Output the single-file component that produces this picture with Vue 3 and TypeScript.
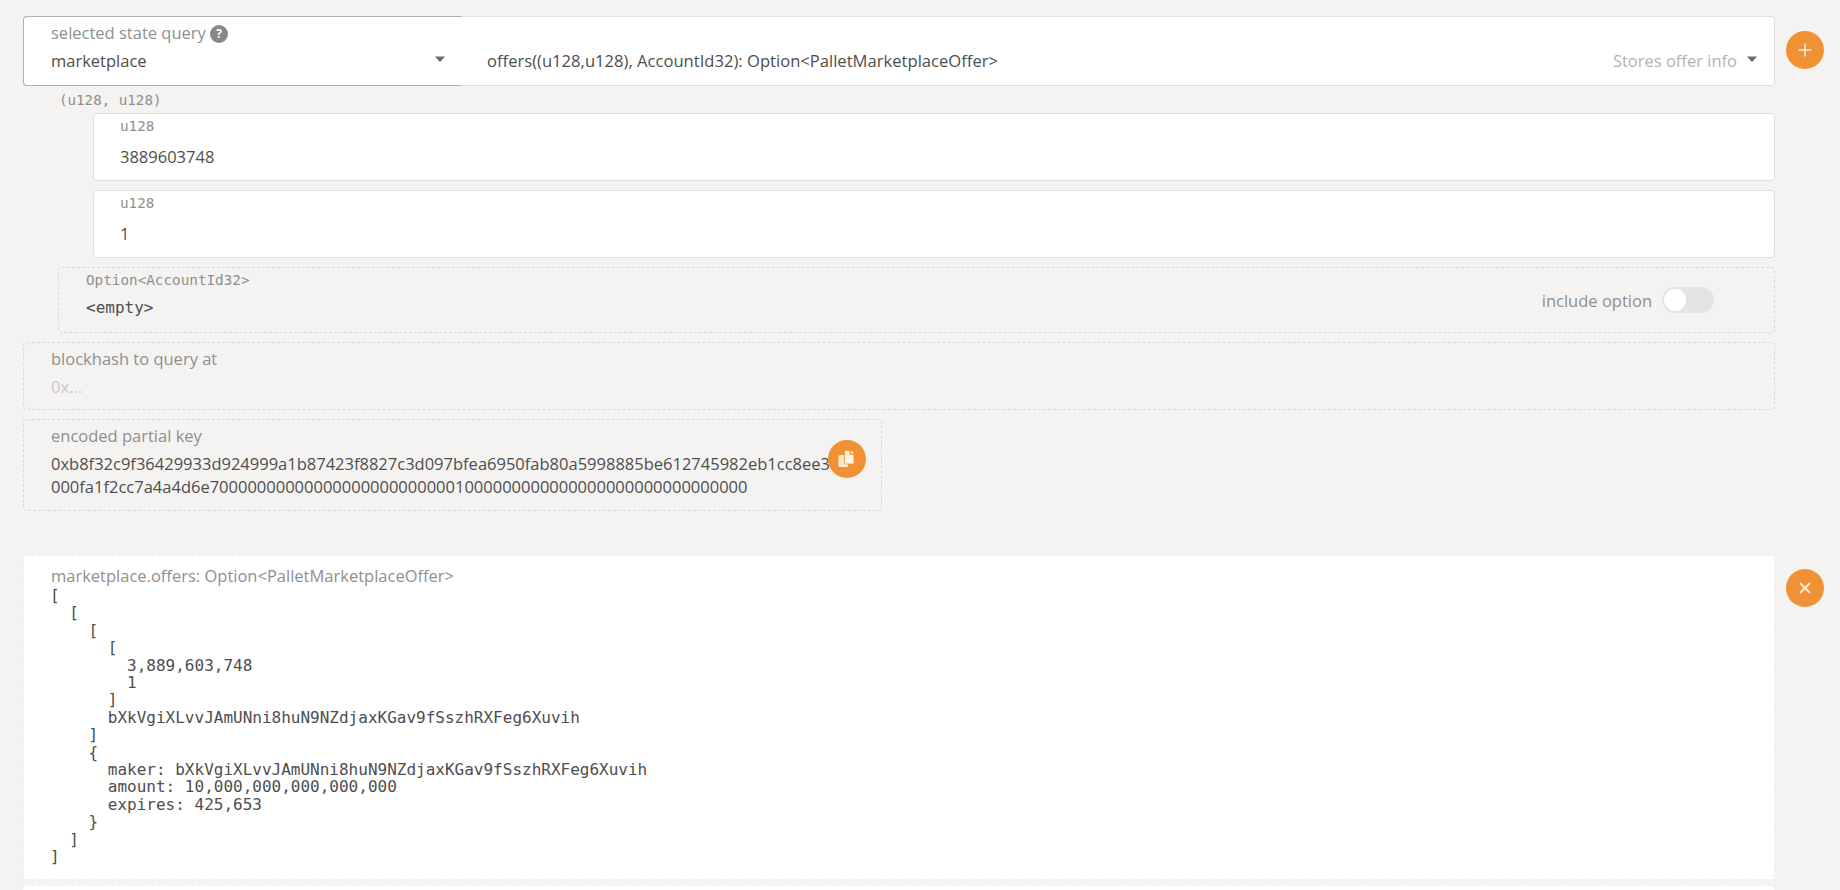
<script setup lang="ts">
const key1 = '0xb8f32c9f36429933d924999a1b87423f8827c3d097bfea6950fab80a5998885be612745982eb1cc8ee3'
const key2 = '000fa1f2cc7a4a4d6e7' + '0'.repeat(25) + '1' + '0'.repeat(30)
const output = `[
  [
    [
      [
        3,889,603,748
        1
      ]
      bXkVgiXLvvJAmUNni8huN9NZdjaxKGav9fSszhRXFeg6Xuvih
    ]
    {
      maker: bXkVgiXLvvJAmUNni8huN9NZdjaxKGav9fSszhRXFeg6Xuvih
      amount: 10,000,000,000,000,000
      expires: 425,653
    }
  ]
]`
</script>

<template>
  <div class="page">
    <section class="row">
      <div class="main">
        <div class="selects">
          <div class="select left">
            <div class="label">selected state query <span class="help">?</span></div>
            <div class="value">marketplace</div>
            <svg class="caret" width="10" height="6" viewBox="0 0 10 6"><path d="M0 0.5 H10 L5.6 5.4 Q5 5.8 4.4 5.4 Z" /></svg>
          </div>
          <div class="select right">
            <div class="value wide">offers((u128,u128), AccountId32): Option&lt;PalletMarketplaceOffer&gt;</div>
            <div class="doc">Stores offer info</div>
            <svg class="caret" width="10" height="6" viewBox="0 0 10 6"><path d="M0 0.5 H10 L5.6 5.4 Q5 5.8 4.4 5.4 Z" /></svg>
          </div>
        </div>
        <div class="tuple">(u128, u128)</div>
        <div class="input first">
          <div class="mono-label">u128</div>
          <div class="value">3889603748</div>
        </div>
        <div class="input">
          <div class="mono-label">u128</div>
          <div class="value">1</div>
        </div>
        <div class="option">
          <div class="opt-text">
            <div class="mono-label">Option&lt;AccountId32&gt;</div>
            <div class="empty">&lt;empty&gt;</div>
          </div>
          <div class="include">include option</div>
          <div class="toggle"><span class="knob"></span></div>
        </div>
        <div class="dashed hash">
          <div class="label">blockhash to query at</div>
          <div class="placeholder">0x...</div>
        </div>
        <div class="dashed key">
          <div class="label">encoded partial key</div>
          <div class="key-text">{{ key1 }}<br />{{ key2 }}</div>
          <button class="round copy" aria-label="copy">
            <svg width="18" height="18" viewBox="0 0 18 18">
              <rect x="0.5" y="5" width="9.5" height="12" rx="1.5" fill="#fde8d0" />
              <path d="M6.5 1.5 a1 1 0 0 1 1-1 H12 V4.5 H16 V13 a1 1 0 0 1-1 1 H7.5 a1 1 0 0 1-1-1 Z" fill="#fff3e6" stroke="#f19135" stroke-width="0.8" />
              <path d="M13 0.5 L16 3.5 H13 Z" fill="#fff3e6" />
            </svg>
          </button>
        </div>
      </div>
      <button class="round side" aria-label="add">
        <svg width="14" height="14" viewBox="0 0 14 14"><path d="M7 0.5 V13.5 M0.5 7 H13.5" stroke="#fdeedd" stroke-width="1.6" /></svg>
      </button>
    </section>

    <section class="row result-row">
      <div class="card">
        <div class="label">marketplace.offers: Option&lt;PalletMarketplaceOffer&gt;</div>
        <pre class="output">{{ output }}</pre>
      </div>
      <button class="round side close" aria-label="close">
        <svg width="12" height="12" viewBox="0 0 12 12"><path d="M1 1 L11 11 M11 1 L1 11" stroke="#fdeedd" stroke-width="1.9" /></svg>
      </button>
    </section>
    <div class="card next"></div>
  </div>
</template>

<style>
html, body {
  margin: 0;
  background: #f5f3f1;
  overflow: hidden;
}
</style>

<style scoped>
.page {
  box-sizing: border-box;
  width: 1840px;
  height: 890px;
  padding: 16px 0 0 23px;
  overflow: hidden;
  background: #f5f3f1;
  color: #4e4e4e;
  font-family: "Open Sans", "Noto Sans", sans-serif;
  font-size: 16.5px;
}
.row {
  display: flex;
  align-items: flex-start;
  gap: 11px;
}
.main {
  width: 1752px;
  flex: none;
}
.selects {
  display: flex;
  height: 70px;
}
.select {
  position: relative;
  box-sizing: border-box;
  height: 70px;
  background: #fff;
  border: 1px solid #dfdfdf;
}
.select.left {
  width: 438px;
  flex: none;
  padding: 5px 0 0 27px;
  border-color: #b0b0b0;
  border-right: 0;
  border-radius: 4px 0 0 4px;
}
.select.right {
  flex: 1;
  display: flex;
  justify-content: space-between;
  padding: 0 37px 0 26px;
  border-left: 0;
  border-radius: 0 4px 4px 0;
}
.select.right .value {
  margin-top: 32px;
}
.select.right .wide {
  font-size: 16.6px;
}
.select.right .doc {
  margin-top: 32px;
  color: #b3b3b3;
}
.caret {
  position: absolute;
  right: 17px;
  top: 39px;
  fill: #6b6b6b;
}
.select.left .caret {
  right: 16px;
}
.label {
  color: #8f8f8f;
  line-height: 22px;
}
.help {
  display: inline-block;
  width: 18px;
  height: 18px;
  border-radius: 50%;
  background: #878787;
  color: #fff;
  font-size: 12px;
  font-weight: 700;
  line-height: 18px;
  text-align: center;
  vertical-align: 1px;
}
.value {
  line-height: 24px;
}
.select.left .value {
  margin-top: 5px;
}
.tuple {
  margin: 5px 0 0 36px;
  height: 22px;
  line-height: 18px;
  color: #8f8f8f;
  font-family: "DejaVu Sans Mono", monospace;
  font-size: 14.2px;
}
.input {
  box-sizing: border-box;
  height: 68px;
  margin: 9px 0 0 70px;
  padding: 3px 0 0 26px;
  background: #fff;
  border: 1px solid #dfdfdf;
  border-radius: 4px;
}
.input.first {
  margin-top: 0;
}
.input .value {
  margin-top: 10px;
}
.mono-label {
  color: #8f8f8f;
  font-family: "DejaVu Sans Mono", monospace;
  font-size: 14.3px;
  line-height: 18px;
}
.option {
  box-sizing: border-box;
  display: flex;
  align-items: center;
  height: 66px;
  margin: 9px 0 0 35px;
  padding: 0 60px 0 27px;
  border: 1px dashed #d8d8d8;
  border-radius: 4px;
}
.opt-text {
  flex: 1;
  align-self: flex-start;
  padding-top: 3px;
}
.empty {
  margin-top: 9px;
  font-family: "DejaVu Sans Mono", monospace;
  font-size: 16px;
  line-height: 20px;
}
.include {
  color: #8f8f8f;
  margin-right: 10px;
}
.toggle {
  width: 52px;
  height: 26px;
  padding: 2px;
  box-sizing: border-box;
  border-radius: 13px;
  background: #e3e4e6;
}
.knob {
  display: block;
  width: 22px;
  height: 22px;
  border-radius: 50%;
  background: #fff;
}
.dashed {
  position: relative;
  box-sizing: border-box;
  margin-top: 9px;
  padding: 5px 0 0 27px;
  border: 1px dashed #d8d8d8;
  border-radius: 4px;
}
.hash {
  height: 68px;
}
.placeholder {
  margin-top: 5px;
  line-height: 24px;
  color: #c8c8c8;
}
.key {
  width: 859px;
  height: 92px;
}
.key-text {
  margin-top: 5px;
  line-height: 23px;
  white-space: nowrap;
}
.round {
  width: 38px;
  height: 38px;
  padding: 0;
  display: flex;
  align-items: center;
  justify-content: center;
  flex: none;
  border: 0;
  border-radius: 50%;
  background: #f19135;
}
.side {
  margin-top: 15px;
}
.copy {
  position: absolute;
  left: 804px;
  top: 20px;
}
.result-row {
  margin-top: 44px;
}
.card {
  box-sizing: border-box;
  width: 1752px;
  height: 325px;
  flex: none;
  padding: 9px 0 0 27px;
  background: #fff;
  border: 1px dashed #ececec;
  border-radius: 4px;
}
.close {
  margin-top: 14px;
}
.output {
  margin: 0 0 0 -1px;
  font-family: "DejaVu Sans Mono", monospace;
  font-size: 16px;
  line-height: 17.4px;
}
.next {
  margin-top: 5px;
  height: 40px;
}
</style>
